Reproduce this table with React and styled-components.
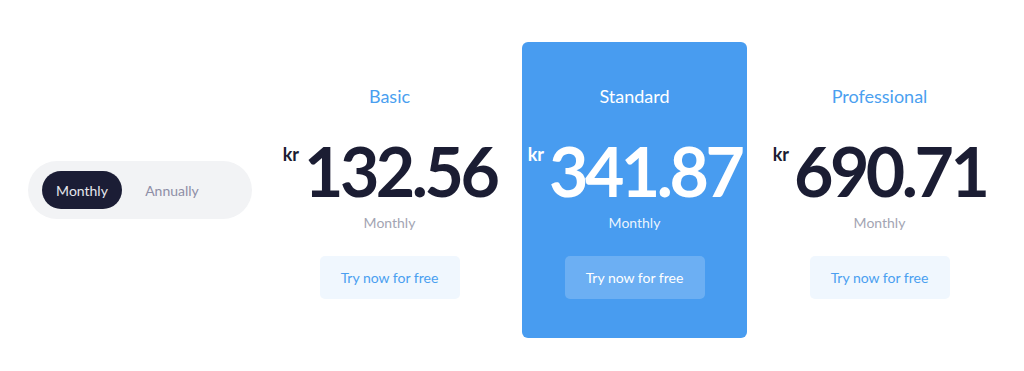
import React, { useState } from "react";
import styled, { createGlobalStyle } from "styled-components";

const GlobalStyle = createGlobalStyle`
  html, body {
    margin: 0;
    padding: 0;
    background: #ffffff;
    font-family: Lato, "Open Sans", sans-serif;
  }
`;

const Page = styled.div`
  width: 1024px;
  height: 371px;
  box-sizing: border-box;
  padding: 42px 0 0 28px;
  display: flex;
  align-items: flex-start;
`;

const Row = styled.div`
  display: flex;
  align-items: center;
  height: 296px;
`;

const Toggle = styled.div`
  display: flex;
  align-items: center;
  width: 224px;
  height: 58px;
  box-sizing: border-box;
  padding: 0 14px;
  border-radius: 29px;
  background: #f2f3f5;
  margin-right: 25px;
`;

const ToggleOption = styled.button`
  border: 0;
  outline: none;
  height: 38px;
  width: 80px;
  margin-right: ${(p) => (p.$active ? "10px" : "0")};
  border-radius: 19px;
  font-family: Lato, sans-serif;
  font-size: 14px;
  cursor: pointer;
  background: ${(p) => (p.$active ? "#1b1d35" : "transparent")};
  color: ${(p) => (p.$active ? "#e6e7ee" : "#8e8ea6")};
`;

const Plans = styled.div`
  display: flex;
  gap: 20px;
`;

const Card = styled.div`
  width: 225px;
  height: 296px;
  box-sizing: border-box;
  padding-top: 43px;
  display: flex;
  flex-direction: column;
  align-items: center;
  border-radius: 6px;
  background: ${(p) => (p.$featured ? "#489cf0" : "transparent")};
`;

const Title = styled.div`
  font-size: 18px;
  line-height: 22px;
  color: ${(p) => (p.$featured ? "#ffffff" : "#4a9ff0")};
`;

const PriceRow = styled.div`
  display: flex;
  align-items: flex-start;
  margin-top: 30px;
  color: ${(p) => (p.$featured ? "#ffffff" : "#1b1d33")};
`;

const Currency = styled.span`
  font-size: 18px;
  font-weight: 700;
  line-height: 18px;
  margin-top: 8px;
  margin-right: 5px;
`;

const Amount = styled.span`
  font-size: 68px;
  font-weight: 700;
  line-height: 68px;
  letter-spacing: -3.5px;
`;

const Period = styled.div`
  margin-top: 8px;
  font-size: 14px;
  line-height: 20px;
  color: ${(p) => (p.$featured ? "rgba(255,255,255,0.9)" : "#a3a5b3")};
`;

const TryButton = styled.button`
  margin-top: 23px;
  width: 140px;
  height: 43px;
  border: 0;
  border-radius: 5px;
  font-family: Lato, sans-serif;
  font-size: 14px;
  cursor: pointer;
  background: ${(p) => (p.$featured ? "rgba(255,255,255,0.2)" : "#f0f7fe")};
  color: ${(p) => (p.$featured ? "#ffffff" : "#4a9ff0")};
`;

const PLANS = [
  { name: "Basic", price: "132.56" },
  { name: "Standard", price: "341.87", featured: true },
  { name: "Professional", price: "690.71" },
];

export default function App() {
  const [period, setPeriod] = useState("Monthly");

  return (
    <>
      <GlobalStyle />
      <Page>
        <Row>
          <Toggle>
            {["Monthly", "Annually"].map((opt) => (
              <ToggleOption
                key={opt}
                $active={period === opt}
                onClick={() => setPeriod(opt)}
              >
                {opt}
              </ToggleOption>
            ))}
          </Toggle>
          <Plans>
            {PLANS.map((plan) => (
              <Card key={plan.name} $featured={plan.featured}>
                <Title $featured={plan.featured}>{plan.name}</Title>
                <PriceRow $featured={plan.featured}>
                  <Currency>kr</Currency>
                  <Amount>{plan.price}</Amount>
                </PriceRow>
                <Period $featured={plan.featured}>Monthly</Period>
                <TryButton $featured={plan.featured}>Try now for free</TryButton>
              </Card>
            ))}
          </Plans>
        </Row>
      </Page>
    </>
  );
}
